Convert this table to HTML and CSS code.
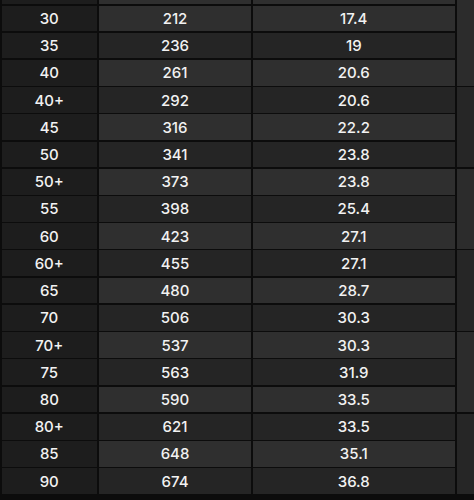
FILE: index.html
```html
<!DOCTYPE html>
<html>
<head>
<meta charset="utf-8">
<link rel="stylesheet" href="styles.css">
</head>
<body>
<div class="grid">
  <div class="cell c1"></div><div class="cell c2 light"></div><div class="cell c3 light"></div>
  <div class="side light span4"></div>

  <div class="cell c1">30</div><div class="cell c2 light">212</div><div class="cell c3 light">17.4</div>
  <div class="cell c1">35</div><div class="cell c2 dark">236</div><div class="cell c3 dark">19</div>
  <div class="cell c1">40</div><div class="cell c2 light">261</div><div class="cell c3 light">20.6</div>

  <div class="cell c1">40+</div><div class="cell c2 dark">292</div><div class="cell c3 dark">20.6</div>
  <div class="side dark span3"></div>
  <div class="cell c1">45</div><div class="cell c2 light">316</div><div class="cell c3 light">22.2</div>
  <div class="cell c1">50</div><div class="cell c2 dark">341</div><div class="cell c3 dark">23.8</div>

  <div class="cell c1">50+</div><div class="cell c2 light">373</div><div class="cell c3 light">23.8</div>
  <div class="side light span3"></div>
  <div class="cell c1">55</div><div class="cell c2 dark">398</div><div class="cell c3 dark">25.4</div>
  <div class="cell c1">60</div><div class="cell c2 light">423</div><div class="cell c3 light">27.1</div>

  <div class="cell c1">60+</div><div class="cell c2 dark">455</div><div class="cell c3 dark">27.1</div>
  <div class="side dark span3"></div>
  <div class="cell c1">65</div><div class="cell c2 light">480</div><div class="cell c3 light">28.7</div>
  <div class="cell c1">70</div><div class="cell c2 dark">506</div><div class="cell c3 dark">30.3</div>

  <div class="cell c1">70+</div><div class="cell c2 light">537</div><div class="cell c3 light">30.3</div>
  <div class="side light span3"></div>
  <div class="cell c1">75</div><div class="cell c2 dark">563</div><div class="cell c3 dark">31.9</div>
  <div class="cell c1">80</div><div class="cell c2 light">590</div><div class="cell c3 light">33.5</div>

  <div class="cell c1">80+</div><div class="cell c2 dark">621</div><div class="cell c3 dark">33.5</div>
  <div class="side dark span3"></div>
  <div class="cell c1">85</div><div class="cell c2 light">648</div><div class="cell c3 light">35.1</div>
  <div class="cell c1">90</div><div class="cell c2 dark">674</div><div class="cell c3 dark">36.8</div>
</div>
</body>
</html>
```
FILE: styles.css
```css
html, body {
  margin: 0;
  padding: 0;
  background: #0c0c0c;
  width: 474px;
  height: 500px;
  overflow: hidden;
}
.grid {
  display: grid;
  grid-template-columns: 95.5px 2px 152px 1.5px 202.5px 1.5px 1fr;
  grid-template-rows: 4px repeat(18, 1fr);
  row-gap: 1.5px;
  height: 494px;
  padding-left: 1.5px;
  background: #0c0c0c;
  font-family: "Inter", "Liberation Sans", sans-serif;
  font-size: 15px;
  font-weight: 500;
  color: #f2f2f2;
}
.cell {
  display: flex;
  align-items: center;
  justify-content: center;
  overflow: hidden;
}
.c1 { grid-column: 1; background: #1d1d1d; }
.c2 { grid-column: 3; }
.c3 { grid-column: 5; }
.light { background: #2f2f2f; }
.dark { background: #252525; }
.side { grid-column: 7; }
.side.light { background: #2c2c2c; }
.side.dark { background: #262626; }
.span4 { grid-row: span 4; }
.span3 { grid-row: span 3; }
```
